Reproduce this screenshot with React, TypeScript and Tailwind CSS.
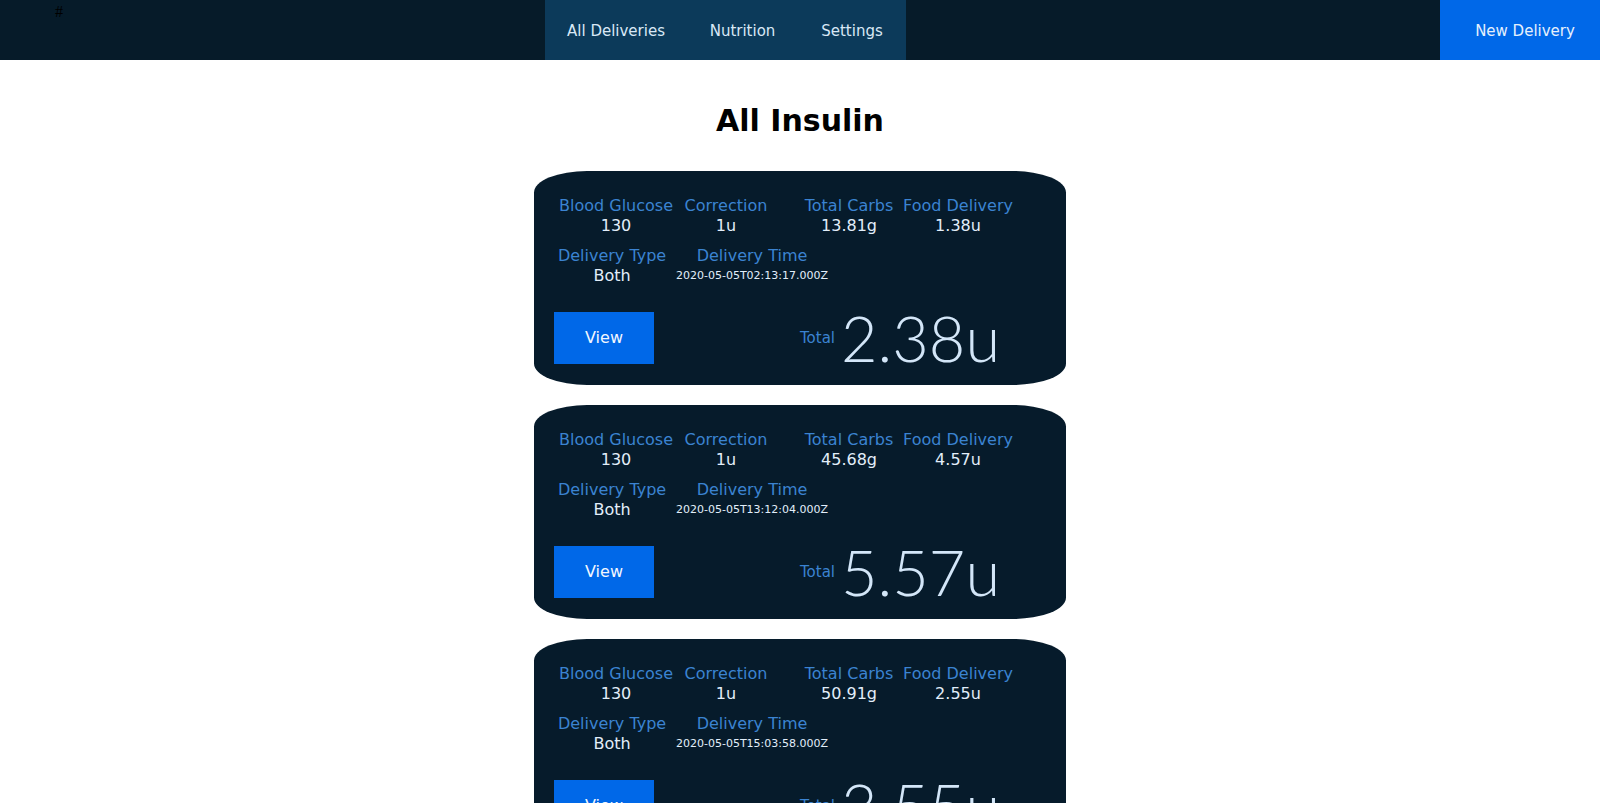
const deliveries = [
  {
    id: 1,
    bloodGlucose: 130,
    correction: '1u',
    totalCarbs: '13.81g',
    foodDelivery: '1.38u',
    deliveryType: 'Both',
    deliveryTime: '2020-05-05T02:13:17.000Z',
    total: '2.38u',
  },
  {
    id: 2,
    bloodGlucose: 130,
    correction: '1u',
    totalCarbs: '45.68g',
    foodDelivery: '4.57u',
    deliveryType: 'Both',
    deliveryTime: '2020-05-05T13:12:04.000Z',
    total: '5.57u',
  },
  {
    id: 3,
    bloodGlucose: 130,
    correction: '1u',
    totalCarbs: '50.91g',
    foodDelivery: '2.55u',
    deliveryType: 'Both',
    deliveryTime: '2020-05-05T15:03:58.000Z',
    total: '3.55u',
  },
]

type Delivery = (typeof deliveries)[number]

const Stat = ({
  label,
  value,
  width,
  small,
}: {
  label: string
  value: string | number
  width: string
  small?: boolean
}) => (
  <div className={`${width} flex flex-col items-center whitespace-nowrap`}>
    <span className="text-[16px] leading-[20px] text-[#3b83d1]">{label}</span>
    <span
      className={
        small
          ? 'text-[11px] leading-[20px] text-[#e2eefa]'
          : 'text-[16px] leading-[20px] text-[#e2eefa]'
      }
    >
      {value}
    </span>
  </div>
)

const InsulinCard = ({ delivery }: { delivery: Delivery }) => (
  <article className="w-[532px] h-[214px] rounded-[10%] bg-[#061b2b] pt-[25px] pl-[25px] flex flex-col">
    <div className="flex">
      <Stat label="Blood Glucose" value={delivery.bloodGlucose} width="w-[114px]" />
      <Stat label="Correction" value={delivery.correction} width="w-[106px]" />
      <div className="ml-[14px] flex">
        <Stat label="Total Carbs" value={delivery.totalCarbs} width="w-[112px]" />
        <Stat label="Food Delivery" value={delivery.foodDelivery} width="w-[106px]" />
      </div>
    </div>
    <div className="flex mt-[10px]">
      <Stat label="Delivery Type" value={delivery.deliveryType} width="w-[106px]" />
      <div className="ml-[7px]">
        <Stat
          label="Delivery Time"
          value={delivery.deliveryTime}
          width="w-[160px]"
          small
        />
      </div>
    </div>
    <div className="flex items-center justify-between mt-[21px] -ml-[5px] pr-[66px]">
      <button className="w-[100px] h-[52px] bg-[#0068e8] text-[16px] text-[#f2f7ff]">
        View
      </button>
      <div className="flex items-center gap-[6px]">
        <span className="text-[15px] text-[#3b83d1]">Total</span>
        <span className="font-['Lato',sans-serif] font-light text-[63px] leading-[62px] text-[#d3e6f8]">
          {delivery.total}
        </span>
      </div>
    </div>
  </article>
)

export default function App() {
  return (
    <div className="min-h-screen bg-white font-['DejaVu_Sans',sans-serif]">
      <header className="h-[60px] bg-[#061b29] flex items-stretch">
        <div className="w-[545px]">
          <span className="ml-[55px] font-['Liberation_Serif',serif] text-[16px] leading-[18px] text-black">
            #
          </span>
        </div>
        <nav className="flex bg-[#0c3a5a] text-[15px] text-[#d9e8f6]">
          <a href="#" className="w-[142px] flex items-center justify-center pt-[2px]">
            All Deliveries
          </a>
          <a href="#" className="w-[111px] flex items-center justify-center pt-[2px]">
            Nutrition
          </a>
          <a href="#" className="w-[108px] flex items-center justify-center pt-[2px]">
            Settings
          </a>
        </nav>
        <div className="flex-1" />
        <button className="w-[160px] bg-[#0068e8] text-[15px] text-[#e6f0fc] pl-[10px] pt-[2px]">
          New Delivery
        </button>
      </header>
      <main className="flex flex-col items-center">
        <h1 className="mt-[43px] text-[30px] leading-[36px] font-bold text-black">
          All Insulin
        </h1>
        <section className="mt-[32px] flex flex-col gap-[20px] pb-[20px]">
          {deliveries.map((delivery) => (
            <InsulinCard key={delivery.id} delivery={delivery} />
          ))}
        </section>
      </main>
    </div>
  )
}
